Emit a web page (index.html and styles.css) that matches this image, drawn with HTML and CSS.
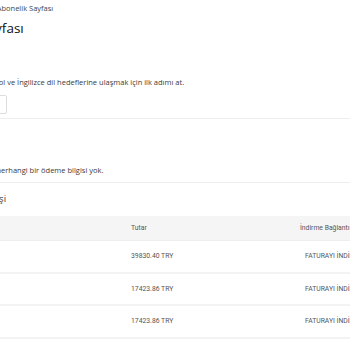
FILE: index.html
```html
<!DOCTYPE html>
<html lang="tr">
<head>
    <meta charset="UTF-8">
    <meta name="viewport" content="width=device-width, initial-scale=1.0">
    <title>Abonelik Sayfası</title>
    <link rel="stylesheet" href="styles.css">
</head>
<body>
    <div class="page">
        <div class="breadcrumb"><span class="crumb">Hesabım</span><span class="sep">/</span><span class="crumb-current">Abonelik Sayfası</span></div>
        <h1 class="title">Abonelik Sayfası</h1>

        <section class="plan">
            <p class="plan-text">Almanca, İspanyol ve İngilizce dil hedeflerine ulaşmak için ilk adımı at.</p>
            <button class="plan-btn">PAKETLERİ İNCELE</button>
        </section>

        <section class="payment">
            <p class="payment-text">Henüz herhangi bir ödeme bilgisi yok.</p>
        </section>

        <section class="invoices">
            <h2 class="invoices-title">Ödeme Geçmişi</h2>
            <table class="invoice-table">
                <thead>
                    <tr>
                        <th class="col-date">Tarih</th>
                        <th class="col-amount">Tutar</th>
                        <th class="col-link">İndirme Bağlantısı</th>
                    </tr>
                </thead>
                <tbody>
                    <tr>
                        <td class="col-date">12.03.2024</td>
                        <td class="col-amount">39830.40 TRY</td>
                        <td class="col-link"><a href="#">FATURAYI İNDİR</a></td>
                    </tr>
                    <tr>
                        <td class="col-date">12.02.2024</td>
                        <td class="col-amount">17423.86 TRY</td>
                        <td class="col-link"><a href="#">FATURAYI İNDİR</a></td>
                    </tr>
                    <tr>
                        <td class="col-date">12.01.2024</td>
                        <td class="col-amount">17423.86 TRY</td>
                        <td class="col-link"><a href="#">FATURAYI İNDİR</a></td>
                    </tr>
                </tbody>
            </table>
        </section>
    </div>
</body>
</html>
```

FILE: styles.css
```css
body {
    margin: 0;
    padding: 0;
    background: #fff;
    font-family: "Open Sans", "Noto Sans", sans-serif;
    color: #3a3a3a;
    overflow: hidden;
}
.page {
    width: 620px;
    margin-left: -180px;
    padding-top: 3px;
}
.breadcrumb {
    font-size: 7.5px;
    color: #444;
    display: flex;
    gap: 4px;
    padding-left: 135px;
}
.crumb {
    color: #888;
}
.sep {
    color: #aaa;
}
.title {
    font-size: 13.5px;
    font-weight: 400;
    margin: 6px 0 0;
    padding-left: 102px;
    color: #111;
}
.plan {
    padding: 40px 0 4px;
    border-bottom: 1px solid #eee;
}
.plan-text {
    font-size: 7.5px;
    margin: 0 0 3px;
    padding-left: 122px;
}
.plan-btn {
    font-family: inherit;
    font-size: 7px;
    color: #555;
    background: #fff;
    border: 1px solid #ddd;
    border-radius: 2px;
    padding: 4px 8px;
    margin-left: 110px;
}
.payment {
    padding: 46px 0 7px;
    border-bottom: 1px solid #eee;
}
.payment-text {
    font-size: 7.5px;
    margin: 0;
    padding-left: 152px;
}
.invoices-title {
    font-size: 9.5px;
    font-weight: 400;
    margin: 9px 0 11px;
    padding-left: 116px;
}
.invoice-table {
    width: 100%;
    border-collapse: collapse;
    font-family: Roboto, "Liberation Sans", sans-serif;
    font-size: 6.8px;
    color: #555;
}
.invoice-table th {
    font-weight: 400;
    background: #f5f5f5;
    height: 24px;
    padding: 0;
    border-bottom: 1px solid #eee;
}
.invoice-table td {
    height: 30.5px;
    padding: 0;
    border-bottom: 2px solid #f3f3f3;
}
.col-date {
    width: 311px;
    text-align: left;
}
.col-amount {
    width: 169px;
    text-align: left;
}
.col-link {
    text-align: left;
}
.col-link a {
    color: #555;
    text-decoration: none;
    padding-left: 5px;
}
```
